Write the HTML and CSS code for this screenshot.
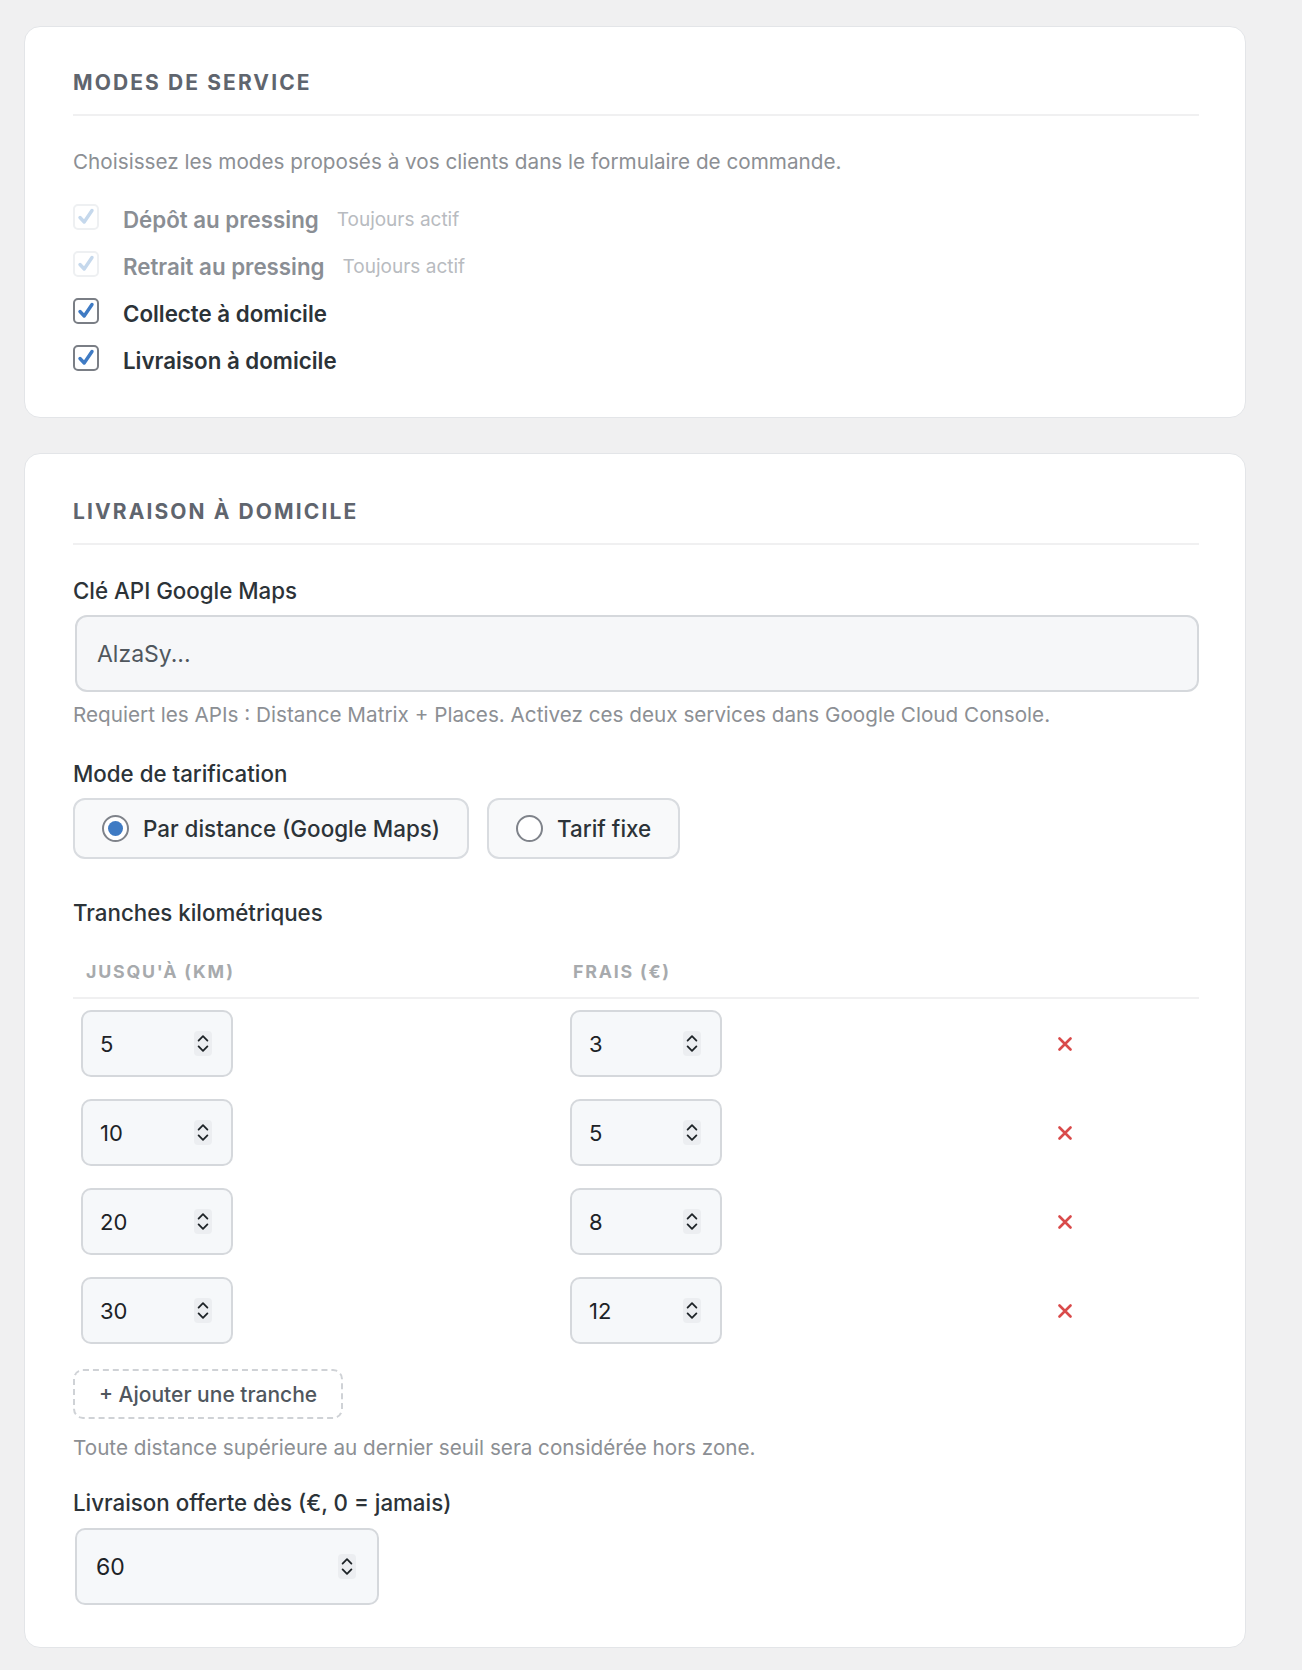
FILE: index.html
```html
<!DOCTYPE html>
<html lang="fr">
<head>
<meta charset="utf-8">
<title>Réglages</title>
<link rel="stylesheet" href="styles.css">
</head>
<body>
<div class="page">
  <section class="card card-modes">
    <h2 class="card-title">Modes de service</h2>
    <p class="desc">Choisissez les modes proposés à vos clients dans le formulaire de commande.</p>
    <ul class="checks">
      <li class="check-row is-disabled">
        <span class="box"><svg viewBox="0 0 26 26" width="26" height="26"><path d="M7 13.5 L11.2 18 L19 6.5" /></svg></span>
        <span class="check-label">Dépôt au pressing</span>
        <span class="badge">Toujours actif</span>
      </li>
      <li class="check-row is-disabled">
        <span class="box"><svg viewBox="0 0 26 26" width="26" height="26"><path d="M7 13.5 L11.2 18 L19 6.5" /></svg></span>
        <span class="check-label">Retrait au pressing</span>
        <span class="badge">Toujours actif</span>
      </li>
      <li class="check-row">
        <span class="box"><svg viewBox="0 0 26 26" width="26" height="26"><path d="M7 13.5 L11.2 18 L19 6.5" /></svg></span>
        <span class="check-label">Collecte à domicile</span>
      </li>
      <li class="check-row">
        <span class="box"><svg viewBox="0 0 26 26" width="26" height="26"><path d="M7 13.5 L11.2 18 L19 6.5" /></svg></span>
        <span class="check-label">Livraison à domicile</span>
      </li>
    </ul>
  </section>

  <section class="card card-delivery">
    <h2 class="card-title">Livraison à domicile</h2>

    <div class="field-label first">Clé API Google Maps</div>
    <div class="text-input"><span class="placeholder">AlzaSy...</span></div>
    <p class="hint">Requiert les APIs : Distance Matrix + Places. Activez ces deux services dans Google Cloud Console.</p>

    <div class="field-label">Mode de tarification</div>
    <div class="radios">
      <div class="radio-btn is-checked"><span class="radio-dot"></span><span class="radio-text">Par distance (Google Maps)</span></div>
      <div class="radio-btn"><span class="radio-dot"></span><span class="radio-text">Tarif fixe</span></div>
    </div>

    <div class="field-label tranches-label">Tranches kilométriques</div>
    <div class="tiers">
      <div class="tiers-head">
        <div class="th th-km">Jusqu'à (km)</div>
        <div class="th th-fee">Frais (€)</div>
        <div class="th"></div>
      </div>
      <div class="tier-row">
        <div class="td"><div class="num"><span>5</span><svg class="spin" viewBox="0 0 18 25" width="18" height="25"><rect x="0" y="0" width="18" height="25" rx="4"/><path d="M4.6 9.6 L9 5.2 L13.4 9.6 M4.6 15.4 L9 19.8 L13.4 15.4"/></svg></div></div>
        <div class="td"><div class="num"><span>3</span><svg class="spin" viewBox="0 0 18 25" width="18" height="25"><rect x="0" y="0" width="18" height="25" rx="4"/><path d="M4.6 9.6 L9 5.2 L13.4 9.6 M4.6 15.4 L9 19.8 L13.4 15.4"/></svg></div></div>
        <div class="td td-del"><svg class="del" viewBox="0 0 14 14" width="14" height="14"><path d="M1.5 1.5 L12.5 12.5 M12.5 1.5 L1.5 12.5"/></svg></div>
      </div>
      <div class="tier-row">
        <div class="td"><div class="num"><span>10</span><svg class="spin" viewBox="0 0 18 25" width="18" height="25"><rect x="0" y="0" width="18" height="25" rx="4"/><path d="M4.6 9.6 L9 5.2 L13.4 9.6 M4.6 15.4 L9 19.8 L13.4 15.4"/></svg></div></div>
        <div class="td"><div class="num"><span>5</span><svg class="spin" viewBox="0 0 18 25" width="18" height="25"><rect x="0" y="0" width="18" height="25" rx="4"/><path d="M4.6 9.6 L9 5.2 L13.4 9.6 M4.6 15.4 L9 19.8 L13.4 15.4"/></svg></div></div>
        <div class="td td-del"><svg class="del" viewBox="0 0 14 14" width="14" height="14"><path d="M1.5 1.5 L12.5 12.5 M12.5 1.5 L1.5 12.5"/></svg></div>
      </div>
      <div class="tier-row">
        <div class="td"><div class="num"><span>20</span><svg class="spin" viewBox="0 0 18 25" width="18" height="25"><rect x="0" y="0" width="18" height="25" rx="4"/><path d="M4.6 9.6 L9 5.2 L13.4 9.6 M4.6 15.4 L9 19.8 L13.4 15.4"/></svg></div></div>
        <div class="td"><div class="num"><span>8</span><svg class="spin" viewBox="0 0 18 25" width="18" height="25"><rect x="0" y="0" width="18" height="25" rx="4"/><path d="M4.6 9.6 L9 5.2 L13.4 9.6 M4.6 15.4 L9 19.8 L13.4 15.4"/></svg></div></div>
        <div class="td td-del"><svg class="del" viewBox="0 0 14 14" width="14" height="14"><path d="M1.5 1.5 L12.5 12.5 M12.5 1.5 L1.5 12.5"/></svg></div>
      </div>
      <div class="tier-row">
        <div class="td"><div class="num"><span>30</span><svg class="spin" viewBox="0 0 18 25" width="18" height="25"><rect x="0" y="0" width="18" height="25" rx="4"/><path d="M4.6 9.6 L9 5.2 L13.4 9.6 M4.6 15.4 L9 19.8 L13.4 15.4"/></svg></div></div>
        <div class="td"><div class="num"><span>12</span><svg class="spin" viewBox="0 0 18 25" width="18" height="25"><rect x="0" y="0" width="18" height="25" rx="4"/><path d="M4.6 9.6 L9 5.2 L13.4 9.6 M4.6 15.4 L9 19.8 L13.4 15.4"/></svg></div></div>
        <div class="td td-del"><svg class="del" viewBox="0 0 14 14" width="14" height="14"><path d="M1.5 1.5 L12.5 12.5 M12.5 1.5 L1.5 12.5"/></svg></div>
      </div>
    </div>

    <div class="add-btn">+ Ajouter une tranche</div>
    <p class="hint hint-zone">Toute distance supérieure au dernier seuil sera considérée hors zone.</p>

    <div class="field-label free-label">Livraison offerte dès (€, 0 = jamais)</div>
    <div class="num num-wide"><span>60</span><svg class="spin" viewBox="0 0 18 25" width="18" height="25"><rect x="0" y="0" width="18" height="25" rx="4"/><path d="M4.6 9.6 L9 5.2 L13.4 9.6 M4.6 15.4 L9 19.8 L13.4 15.4"/></svg></div>
  </section>
</div>
</body>
</html>
```

FILE: styles.css
```css
* { box-sizing: border-box; }

html, body {
  margin: 0;
  background: #f0f0f1;
}

body {
  font-family: Inter, Roboto, "Liberation Sans", Arial, sans-serif;
  color: #2c3338;
}

.page {
  padding: 26px 56px 23px 24px;
}

.card {
  background: #ffffff;
  border: 1px solid #e3e5e8;
  border-radius: 16px;
  padding: 42px 46px 33px 48px;
}

.card + .card {
  margin-top: 35px;
}

.card-delivery {
  padding-top: 44px;
  padding-bottom: 42px;
}

.card-title {
  margin: 0;
  font-size: 21px;
  line-height: 28px;
  font-weight: 700;
  letter-spacing: 0.1em;
  text-transform: uppercase;
  color: #5f656e;
  padding-bottom: 17px;
  border-bottom: 2px solid #f0f0f1;
}

.desc {
  margin: 32px 0 0 0;
  font-size: 20.7px;
  line-height: 28px;
  color: #8c8f94;
}

.checks {
  list-style: none;
  margin: 20px 0 0 0;
  padding: 0;
}

.check-row {
  height: 47px;
  display: flex;
  align-items: center;
}

.box {
  width: 26px;
  height: 26px;
  border: 2px solid #7a7e85;
  border-radius: 5px;
  background: #fff;
  display: flex;
  align-items: center;
  justify-content: center;
  margin-top: -6px;
  flex: none;
}

.box svg {
  width: 26px;
  height: 26px;
  flex: none;
}

.box path {
  fill: none;
  stroke: #3f7bc4;
  stroke-width: 3.4;
  stroke-linecap: round;
  stroke-linejoin: round;
}

.check-label {
  margin-left: 24px;
  font-size: 22.3px;
  font-weight: 600;
  color: #2c3338;
}

.badge {
  margin-left: 18px;
  font-size: 19px;
  color: #b8bbc0;
}

.is-disabled .box {
  border-color: #eef0f2;
}

.is-disabled .box path {
  stroke: #c5d8ec;
}

.is-disabled .check-label {
  color: #8a8e94;
}

.field-label {
  margin-top: 32px;
  font-size: 22.3px;
  line-height: 28px;
  font-weight: 500;
  color: #2c3338;
}

.text-input {
  margin: 10px 0 0 2px;
  height: 77px;
  border: 2px solid #d5d8dc;
  border-radius: 12px;
  background: #f6f7f9;
  display: flex;
  align-items: center;
  padding: 0 20px;
  font-size: 23px;
}

.placeholder {
  color: #50575e;
}

.hint {
  margin: 10px 0 0 0;
  font-size: 20.7px;
  line-height: 26px;
  color: #8c8f94;
}

.radios {
  margin-top: 10px;
  display: flex;
  gap: 18px;
}

.radio-btn {
  height: 61px;
  border: 2px solid #d9dce0;
  border-radius: 12px;
  background: #f8f9fa;
  display: flex;
  align-items: center;
  padding: 0 27px 0 27px;
}

.radio-dot {
  width: 27px;
  height: 27px;
  border-radius: 50%;
  border: 2px solid #7f838a;
  background: #fff;
  display: flex;
  align-items: center;
  justify-content: center;
  flex: none;
}

.is-checked .radio-dot::after {
  content: "";
  width: 15px;
  height: 15px;
  border-radius: 50%;
  background: #3f7bc4;
}

.radio-text {
  margin-left: 14px;
  font-size: 22.4px;
  font-weight: 500;
  color: #2c3338;
}

.tranches-label {
  margin-top: 40px;
}

.tiers {
  margin-top: 18px;
}

.tiers-head,
.tier-row {
  display: grid;
  grid-template-columns: 489px 495px 1fr;
}

.tiers-head {
  border-bottom: 2px solid #f0f0f1;
}

.th {
  padding: 15px 0 13px 13px;
  font-size: 17.8px;
  line-height: 24px;
  font-weight: 700;
  letter-spacing: 0.1em;
  text-transform: uppercase;
  color: #a7aaad;
}

.th-fee {
  padding-left: 11px;
}

.td {
  padding: 11px 0 11px 8px;
  display: flex;
  align-items: center;
}

.td-del {
  padding-left: 1px;
}

.num {
  width: 152px;
  height: 67px;
  border: 2px solid #d5d8dc;
  border-radius: 10px;
  background: #f6f8fa;
  display: flex;
  align-items: center;
  justify-content: space-between;
  padding: 0 19px 0 17px;
  font-size: 22px;
  color: #1d2327;
}

.num-wide {
  margin: 11px 0 0 2px;
  width: 304px;
  height: 77px;
  padding: 0 21px 0 19px;
  font-size: 23px;
}

.spin {
  flex: none;
}

.spin rect {
  fill: #eceef1;
}

.spin path {
  fill: none;
  stroke: #1d2327;
  stroke-width: 1.8;
  stroke-linecap: round;
  stroke-linejoin: round;
}

.del path {
  stroke: #d94b4b;
  stroke-width: 2.6;
  stroke-linecap: round;
}

.add-btn {
  margin-top: 14px;
  display: inline-flex;
  align-items: center;
  height: 50px;
  padding: 0 24px;
  border: 2px dashed #cfd2d6;
  border-radius: 10px;
  font-size: 21px;
  font-weight: 500;
  color: #50575e;
}

.hint-zone {
  margin-top: 16px;
}

.free-label {
  margin-top: 28px;
}
```
